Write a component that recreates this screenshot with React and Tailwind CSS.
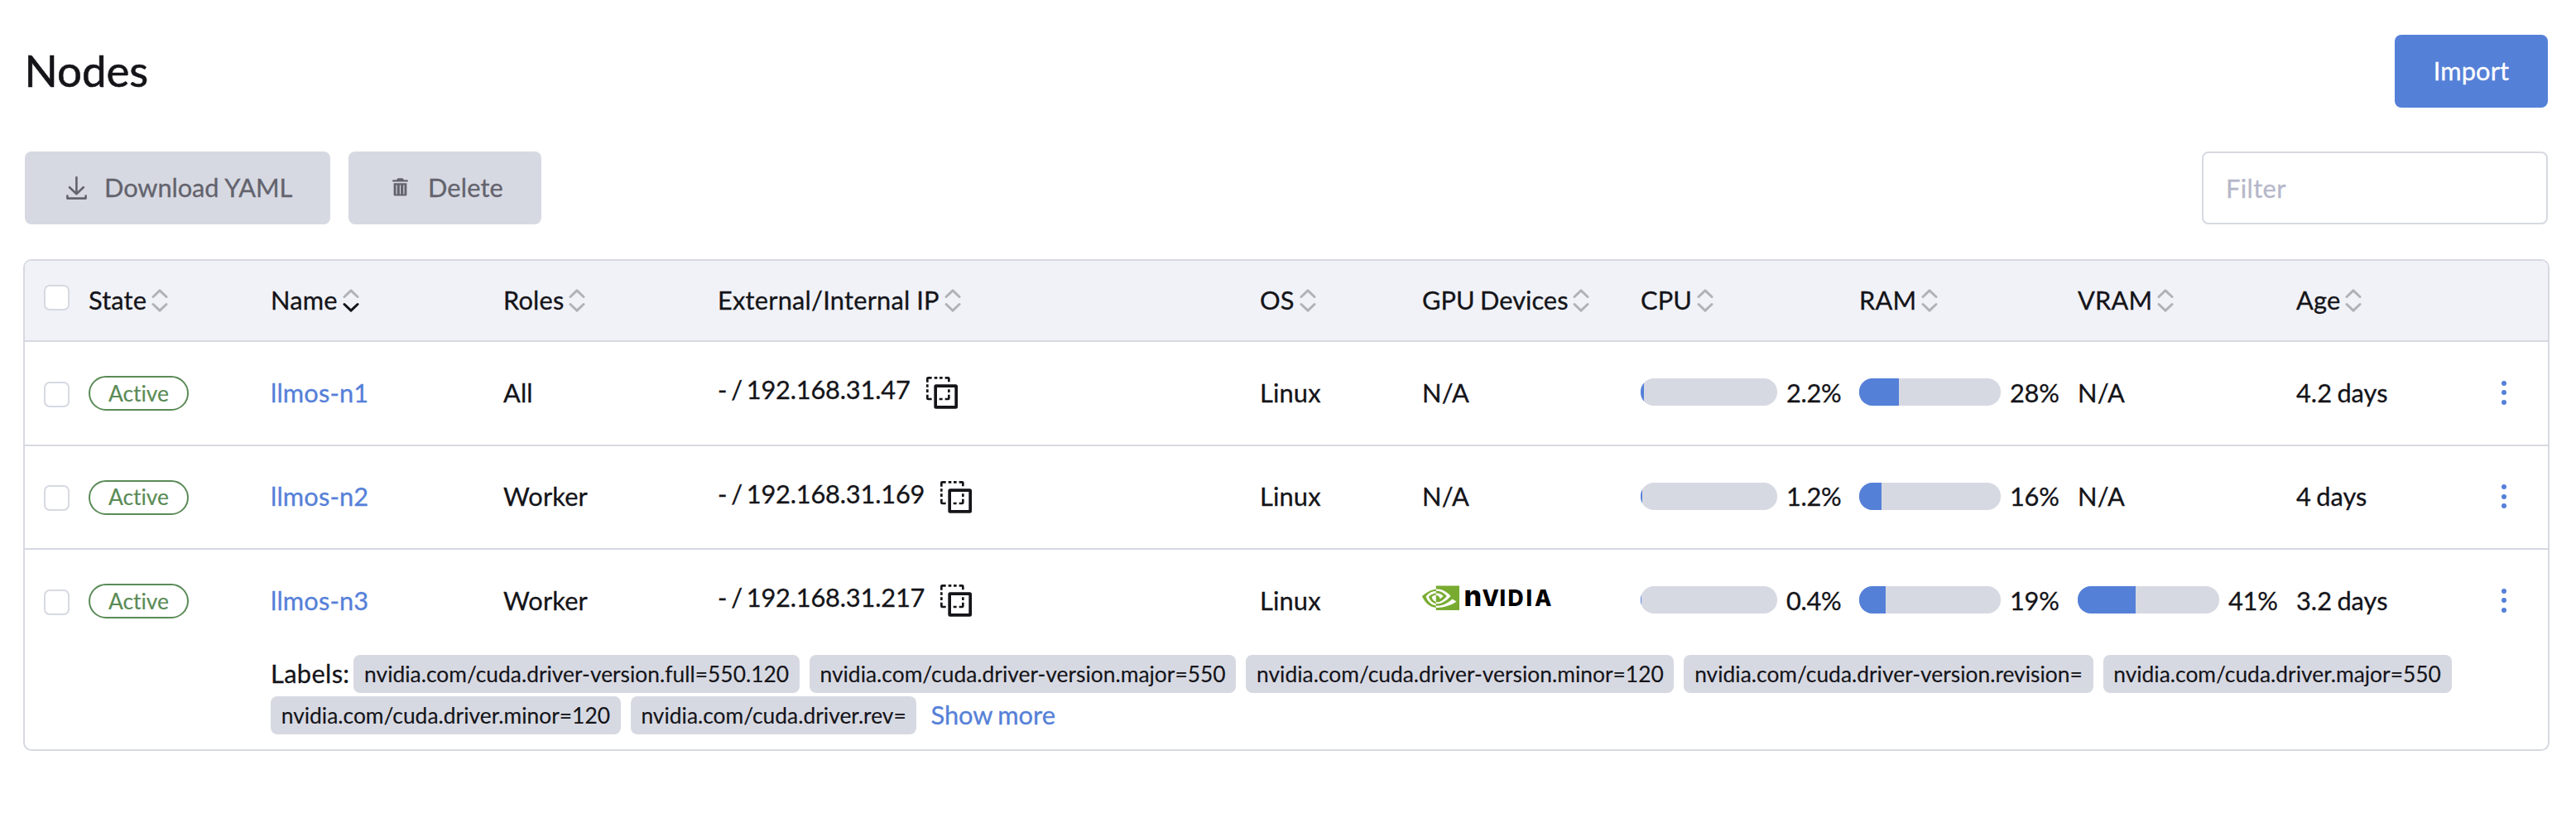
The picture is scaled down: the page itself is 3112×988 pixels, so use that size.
import React from "react";
import { SiNvidia } from "react-icons/si";

const GRID =
  "grid grid-cols-[77px_220px_281px_259px_655px_196px_264px_264px_264px_264px_198px_106px]";

const columns = [
  { label: "State" },
  { label: "Name", sorted: true },
  { label: "Roles" },
  { label: "External/Internal IP", className: "tracking-[0.22px] [word-spacing:-0.5px]" },
  { label: "OS" },
  { label: "GPU Devices", className: "tracking-normal" },
  { label: "CPU" },
  { label: "RAM" },
  { label: "VRAM" },
  { label: "Age" },
];

const nodes = [
  { name: "llmos-n1", role: "All", ip: "192.168.31.47", cpu: 2.2, ram: 28, age: "4.2 days" },
  { name: "llmos-n2", role: "Worker", ip: "192.168.31.169", cpu: 1.2, ram: 16, age: "4 days" },
  { name: "llmos-n3", role: "Worker", ip: "192.168.31.217", gpu: true, cpu: 0.4, ram: 19, vram: 41, age: "3.2 days" },
];

const rowClasses = [
  "h-[126px] border-b-2 border-[#d7d9e2]",
  "h-[125px] border-b-2 border-[#d7d9e2]",
  "h-[124px]",
];

const labels = [
  "nvidia.com/cuda.driver-version.full=550.120",
  "nvidia.com/cuda.driver-version.major=550",
  "nvidia.com/cuda.driver-version.minor=120",
  "nvidia.com/cuda.driver-version.revision=",
  "nvidia.com/cuda.driver.major=550",
  "nvidia.com/cuda.driver.minor=120",
  "nvidia.com/cuda.driver.rev=",
];

function SortIcon({ sorted }) {
  return (
    <svg className="h-7 w-5 shrink-0" viewBox="0 0 20 28" fill="none" strokeWidth="3" strokeLinecap="round" strokeLinejoin="round">
      <path d="M2 9.5 10 1.8l8 7.7" stroke="#b1b2b7" />
      <path d="M2 18.5l8 7.7 8-7.7" stroke={sorted ? "#141419" : "#b1b2b7"} />
    </svg>
  );
}

function DownloadIcon() {
  return (
    <svg className="h-7 w-[25px]" viewBox="0 0 25 28" fill="none" stroke="currentColor" strokeLinecap="round" strokeLinejoin="round">
      <path d="M12.4 1.3V21M4 13.2l8.4 8 8.4-8" strokeWidth="2.6" />
      <path d="M1.4 23.6v3h22.2v-3" strokeWidth="2.6" />
    </svg>
  );
}

function TrashIcon() {
  return (
    <svg className="h-[22px] w-[19px]" viewBox="0 0 19 22">
      <path d="M6.5 0.3h6l1.4 1.9H18a.8.8 0 0 1 .8.8v1.6H.2V3a.8.8 0 0 1 .8-.8h4.100z" fill="currentColor" />
      <path
        d="M1.600 6.300h15.800V20a1.500 1.500 0 0 1-1.500 1.500H3.100A1.500 1.500 0 0 1 1.600 20zM4.500 8.500v11h1.200v-11zM8.900 8.500v11h1.200v-11zM13.300 8.500v11h1.200v-11z"
        fill="currentColor"
        fillRule="evenodd"
      />
    </svg>
  );
}

function CopyIcon() {
  return (
    <svg className="h-[39px] w-[38px] shrink-0" viewBox="57 47 114 117" fill="none" stroke="#141419">
      <path
        strokeWidth="8"
        d="M77 51H64q-3 0-3 3V67M86 51h11M105 51h11M125 51h11q3 0 3 3V66M61 75v10M61 93v11M61 112v13q0 3 3 3h13M104 128h12M125 128h11q3 0 3-3V112M139 93v11"
      />
      <rect x="90.500" y="80.500" width="75" height="77" rx="2" strokeWidth="11" />
    </svg>
  );
}

function NvidiaLogo() {
  return (
    <div className="flex items-center gap-[7px]">
      <div className="flex h-[30px] w-[45px] items-center justify-center overflow-hidden">
        <SiNvidia className="size-[45px] shrink-0 text-[#78ab30]" />
      </div>
      <svg className="h-[30px] w-[108px] overflow-visible" viewBox="0 0 108 30" fontFamily="Inter, sans-serif" fontWeight="800" fill="#000">
        <text y="25" fontSize="26.500">
          <tspan x="-1.500" fontSize="34">n</tspan>
          <tspan x="20.500">V</tspan>
          <tspan x="41.500">I</tspan>
          <tspan x="51.500">D</tspan>
          <tspan x="73.500">I</tspan>
          <tspan x="84">A</tspan>
        </text>
      </svg>
    </div>
  );
}

function Checkbox() {
  return <span className="size-[31px] rounded-[7px] border-2 border-[#d7d9e2] bg-white" />;
}

function Usage({ value, bar }) {
  if (value === undefined) return <div>N/A</div>;
  return (
    <div className="flex items-center gap-[11px]">
      <div className={`mb-[3px] h-[33px] overflow-hidden rounded-[16px] bg-[#d7d9e2] ${bar}`}>
        <div className="h-full bg-[#5580d8]" style={{ width: `${value}%` }} />
      </div>
      <span className="tracking-[-0.3px]">{value}%</span>
    </div>
  );
}

function NodeRow({ node, className }) {
  return (
    <div className={`${GRID} items-center ${className}`}>
      <div className="flex pl-[23px] pt-[2px]">
        <Checkbox />
      </div>
      <div className="flex">
        <span className="flex h-[42px] w-[121px] items-center justify-center rounded-full border-2 border-[#5a8b56] text-[26.4px] tracking-normal text-[#5a8b56] [-webkit-text-stroke-width:0.15px]">
          Active
        </span>
      </div>
      <div className="text-[#5580d8]">{node.name}</div>
      <div>{node.role}</div>
      <div className="flex items-center">
        <span className="pb-[7px] tracking-[-0.2px] [word-spacing:-2.8px]">- / {node.ip}</span>
        <span className="ml-[19px] flex pb-px">
          <CopyIcon />
        </span>
      </div>
      <div>Linux</div>
      <div>{node.gpu ? <div className="-mt-[8px]"><NvidiaLogo /></div> : "N/A"}</div>
      <Usage value={node.cpu} bar="w-[165px]" />
      <Usage value={node.ram} bar="w-[171px]" />
      <Usage value={node.vram} bar="w-[171px]" />
      <div className="tracking-normal">{node.age}</div>
      <div className="flex flex-col items-center gap-[5.500px] pb-[2px]">
        <span className="size-[6px] rounded-full bg-[#5580d8]" />
        <span className="size-[6px] rounded-full bg-[#5580d8]" />
        <span className="size-[6px] rounded-full bg-[#5580d8]" />
      </div>
    </div>
  );
}

export default function App() {
  return (
    <div className="h-[988px] w-[3112px] bg-white pl-[28px] pr-[32px] pt-[42px] font-['Lato',sans-serif] text-[30.8px] leading-none tracking-[0.15px] text-[#141419] [-webkit-text-stroke-width:0.3px] [font-variant-ligatures:none] [word-spacing:-1.5px]">
      <header className="flex h-[88px] items-center justify-between pl-[1.500px] pr-[2px]">
        <h1 className="pb-[2px] text-[52.8px] leading-none tracking-normal [-webkit-text-stroke-width:0.6px]">Nodes</h1>
        <button className="flex h-[88px] w-[185px] items-center justify-center rounded-[8px] bg-[#5580d8] text-white">
          Import
        </button>
      </header>

      <div className="mt-[53px] flex h-[88px] justify-between pl-[2px] pr-[2px]">
        <div className="flex gap-[22px] text-[#63636d]">
          <button className="flex w-[369px] items-center rounded-[8px] bg-[#d7d9e2] pl-[50px] tracking-[-0.07px]">
            <DownloadIcon />
            <span className="ml-[21px]">Download YAML</span>
          </button>
          <button className="flex w-[233px] items-center rounded-[8px] bg-[#d7d9e2] pl-[53px]">
            <span className="-mt-[2px]"><TrashIcon /></span>
            <span className="ml-[24px]">Delete</span>
          </button>
        </div>
        <input
          className="w-[418px] rounded-[8px] border-2 border-[#d7d9e2] pl-[27px] tracking-[0.4px] outline-none placeholder:text-[#b5b7c9]"
          placeholder="Filter"
        />
      </div>

      <div className="mt-[42px] overflow-hidden rounded-[10px] border-2 border-[#d7d9e2]">
        <div className={`${GRID} h-[98px] items-center border-b-2 border-[#d7d9e2] bg-[#f1f2f7]`}>
          <div className="flex pb-[7px] pl-[23px]">
            <Checkbox />
          </div>
          {columns.map((c) => (
            <div key={c.label} className="flex items-center gap-[6px]">
              <span className={c.className}>{c.label}</span>
              <SortIcon sorted={c.sorted} />
            </div>
          ))}
          <div />
        </div>

        {nodes.map((n, i) => (
          <NodeRow key={n.name} node={n} className={rowClasses[i]} />
        ))}

        <div className="flex flex-wrap items-center gap-x-[12px] gap-y-[4px] pb-[18px] pl-[297px] pt-[3px]">
          <span className="-mr-[7px] pt-[1px] tracking-[0.35px]">Labels:</span>
          {labels.map((l) => (
            <span key={l} className="flex h-[46px] items-center rounded-[8px] bg-[#d7d9e2] px-[12.700px] pt-[1px] text-[26.4px] tracking-normal [-webkit-text-stroke-width:0.15px]">
              {l}
            </span>
          ))}
          <a className="ml-[5px] pt-[1px] tracking-normal text-[#5580d8]">Show more</a>
        </div>
      </div>
    </div>
  );
}
